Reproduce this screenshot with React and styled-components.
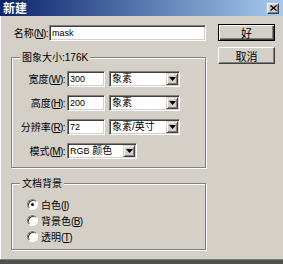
import styled, { createGlobalStyle } from 'styled-components'

const Global = createGlobalStyle`
html, body {
  margin: 0;
  padding: 0;
  background: #d4d0c8;
}
body {
  font-family: 'Liberation Sans', 'Noto Sans CJK SC', sans-serif;
  font-size: 10px;
  color: #000;
}
`

const Window = styled.div`
width: 283px;
height: 264px;
box-sizing: border-box;
background: #d4d0c8;
display: flex;
flex-direction: column;
border-bottom: 4px solid #505050;
box-shadow: inset 0 -1px 0 #808080, inset 1px 0 0 #fff;
`

const TitleBar = styled.div`
height: 16px;
flex: none;
display: flex;
align-items: center;
justify-content: space-between;
padding: 0 4px 0 3px;
background: linear-gradient(to right, #0a246a, #a6caf0);
`

const Title = styled.span`
color: #fff;
font-weight: bold;
font-family: 'Noto Sans CJK SC', sans-serif;
font-size: 12px;
line-height: 16px;
`

const CloseBox = styled.div`
box-sizing: border-box;
width: 12px;
height: 11px;
background: #d4d0c8;
border: 1px solid;
border-color: #fff #404040 #404040 #fff;
box-shadow: inset -1px -1px 0 #808080;
display: flex;
align-items: center;
justify-content: center;
`

const Body = styled.div`
display: flex;
padding: 9px 0 0 11px;
`

const LeftCol = styled.div`
width: 195px;
display: flex;
flex-direction: column;
`

const RightCol = styled.div`
margin-left: 12px;
margin-top: -1px;
display: flex;
flex-direction: column;
gap: 6px;
`

const NameRow = styled.div`
display: flex;
align-items: center;
height: 16px;
`

const Label = styled.span`
width: ${p => p.$w}px;
flex: none;
text-align: right;
padding-right: ${p => p.$pr || 2}px;
box-sizing: border-box;
font-family: 'Noto Sans CJK SC', sans-serif;
font-size: 10px;
line-height: 16px;
white-space: nowrap;
`

const Key = styled.span`
font-family: 'Liberation Sans', sans-serif;
font-size: 10px;
letter-spacing: -0.6px;
`

const Field = styled.div`
box-sizing: border-box;
width: ${p => p.$w}px;
height: 16px;
flex: none;
background: #fff;
border: 1px solid;
border-color: #808080 #fff #fff #808080;
box-shadow: inset 1px 1px 0 #404040, inset -1px -1px 0 #d4d0c8;
font-family: 'Liberation Sans', 'Noto Sans CJK SC', sans-serif;
font-size: ${p => p.$fs || 10}px;
line-height: 12px;
padding: 0 2px;
display: flex;
align-items: center;
justify-content: space-between;
white-space: nowrap;
`

const Arrow = styled.div`
box-sizing: border-box;
width: 12px;
height: 12px;
margin-right: -1px;
background: #d4d0c8;
border: 1px solid;
border-color: #d4d0c8 #404040 #404040 #d4d0c8;
box-shadow: inset 1px 1px 0 #fff, inset -1px -1px 0 #808080;
display: flex;
align-items: center;
justify-content: center;
`

const Group = styled.fieldset`
margin: ${p => p.$mt}px 0 0 0;
padding: 0 0 ${p => p.$pb}px 0;
border: 1px solid #808080;
box-shadow: inset 1px 1px 0 #fff, 1px 1px 0 #fff;
display: flex;
flex-direction: column;
min-width: 0;
`

const Legend = styled.legend`
margin-left: 8px;
padding: 0 2px;
background: #d4d0c8;
font-family: 'Noto Sans CJK SC', sans-serif;
font-size: 10px;
line-height: 14px;
`

const Rows = styled.div`
display: flex;
flex-direction: column;
gap: ${p => p.$gap}px;
padding-top: 6px;
`

const Row = styled.div`
display: flex;
align-items: center;
height: 16px;
`

const Button = styled.div`
box-sizing: border-box;
width: 57px;
height: 17px;
background: #d4d0c8;
border: 1px solid;
border-color: ${p => (p.$default ? '#000' : '#fff #404040 #404040 #fff')};
box-shadow: ${p =>
    p.$default
      ? 'inset 1px 1px 0 #fff, inset -1px -1px 0 #404040, inset -2px -2px 0 #808080'
      : 'inset -1px -1px 0 #808080'};
display: flex;
align-items: center;
justify-content: center;
font-family: 'Noto Sans CJK SC', sans-serif;
font-size: 11px;
`

const RadioRow = styled.div`
display: flex;
align-items: center;
height: 16px;
padding-left: 15px;
gap: 3px;
font-family: 'Noto Sans CJK SC', sans-serif;
font-size: 10px;
`

const Radio = styled.div`
box-sizing: border-box;
width: 11px;
height: 11px;
border-radius: 50%;
background: #fff;
border: 1px solid;
border-color: #808080 #fff #fff #808080;
box-shadow: inset 1px 1px 0 #404040;
display: flex;
align-items: center;
justify-content: center;
&::after {
  content: '';
  width: 3px;
  height: 3px;
  border-radius: 50%;
  background: ${p => (p.$on ? '#000' : 'transparent')};
}
`

const Small = styled.span`
font-family: 'Liberation Sans', sans-serif;
font-size: ${p => p.$fs || 9}px;
`

const Spacer = styled.div`
width: ${p => p.$w}px;
flex: none;
`

const DownArrow = () => (
  <svg width="7" height="4" viewBox="0 0 7 4">
    <polygon points="0,0 7,0 3.5,4" fill="#000" />
  </svg>
)

const Select = ({ w, children }) => (
  <Field $w={w}>
    <span>{children}</span>
    <Arrow><DownArrow /></Arrow>
  </Field>
)

const sizeRows = [
  { label: '宽度', key: 'W', value: '300', unit: '象素' },
  { label: '高度', key: 'H', value: '200', unit: '象素' },
  { label: '分辨率', key: 'R', value: '72', unit: '象素/英寸' },
]

const bgOptions = [
  { label: '白色', key: 'I', on: true },
  { label: '背景色', key: 'B' },
  { label: '透明', key: 'T' },
]

export default function App() {
  return (
    <>
      <Global />
      <Window>
        <TitleBar>
          <Title>新建</Title>
          <CloseBox>
            <svg width="7" height="6" viewBox="0 0 7 6">
              <path d="M0.5 0.5 L6.5 5.5 M6.5 0.5 L0.5 5.5" stroke="#000" strokeWidth="1.4" />
            </svg>
          </CloseBox>
        </TitleBar>
        <Body>
          <LeftCol>
            <NameRow>
              <Label $w={38} $pr={1}>名称<Key>(<u>N</u>):</Key></Label>
              <Field $w={157} $fs={9}>mask</Field>
            </NameRow>

            <Group $mt={9} $pb={8}>
              <Legend>图象大小<Small $fs={10}>:176K</Small></Legend>
              <Rows $gap={8}>
                {sizeRows.map(r => (
                  <Row key={r.key}>
                    <Label $w={55}>{r.label}<Key>(<u>{r.key}</u>):</Key></Label>
                    <Field $w={38} $fs={9}>{r.value}</Field>
                    <Spacer $w={4} />
                    <Select w={71}>{r.unit}</Select>
                  </Row>
                ))}
                <Row>
                  <Label $w={55}>模式<Key>(<u>M</u>):</Key></Label>
                  <Select w={70}><Small>RGB</Small> 颜色</Select>
                </Row>
              </Rows>
            </Group>

            <Group $mt={8} $pb={5}>
              <Legend>文档背景</Legend>
              <Rows $gap={0}>
                {bgOptions.map(o => (
                  <RadioRow key={o.key}>
                    <Radio $on={o.on} />
                    <span>{o.label}<Key>(<u>{o.key}</u>)</Key></span>
                  </RadioRow>
                ))}
              </Rows>
            </Group>
          </LeftCol>

          <RightCol>
            <Button $default>好</Button>
            <Button>取消</Button>
          </RightCol>
        </Body>
      </Window>
    </>
  )
}
